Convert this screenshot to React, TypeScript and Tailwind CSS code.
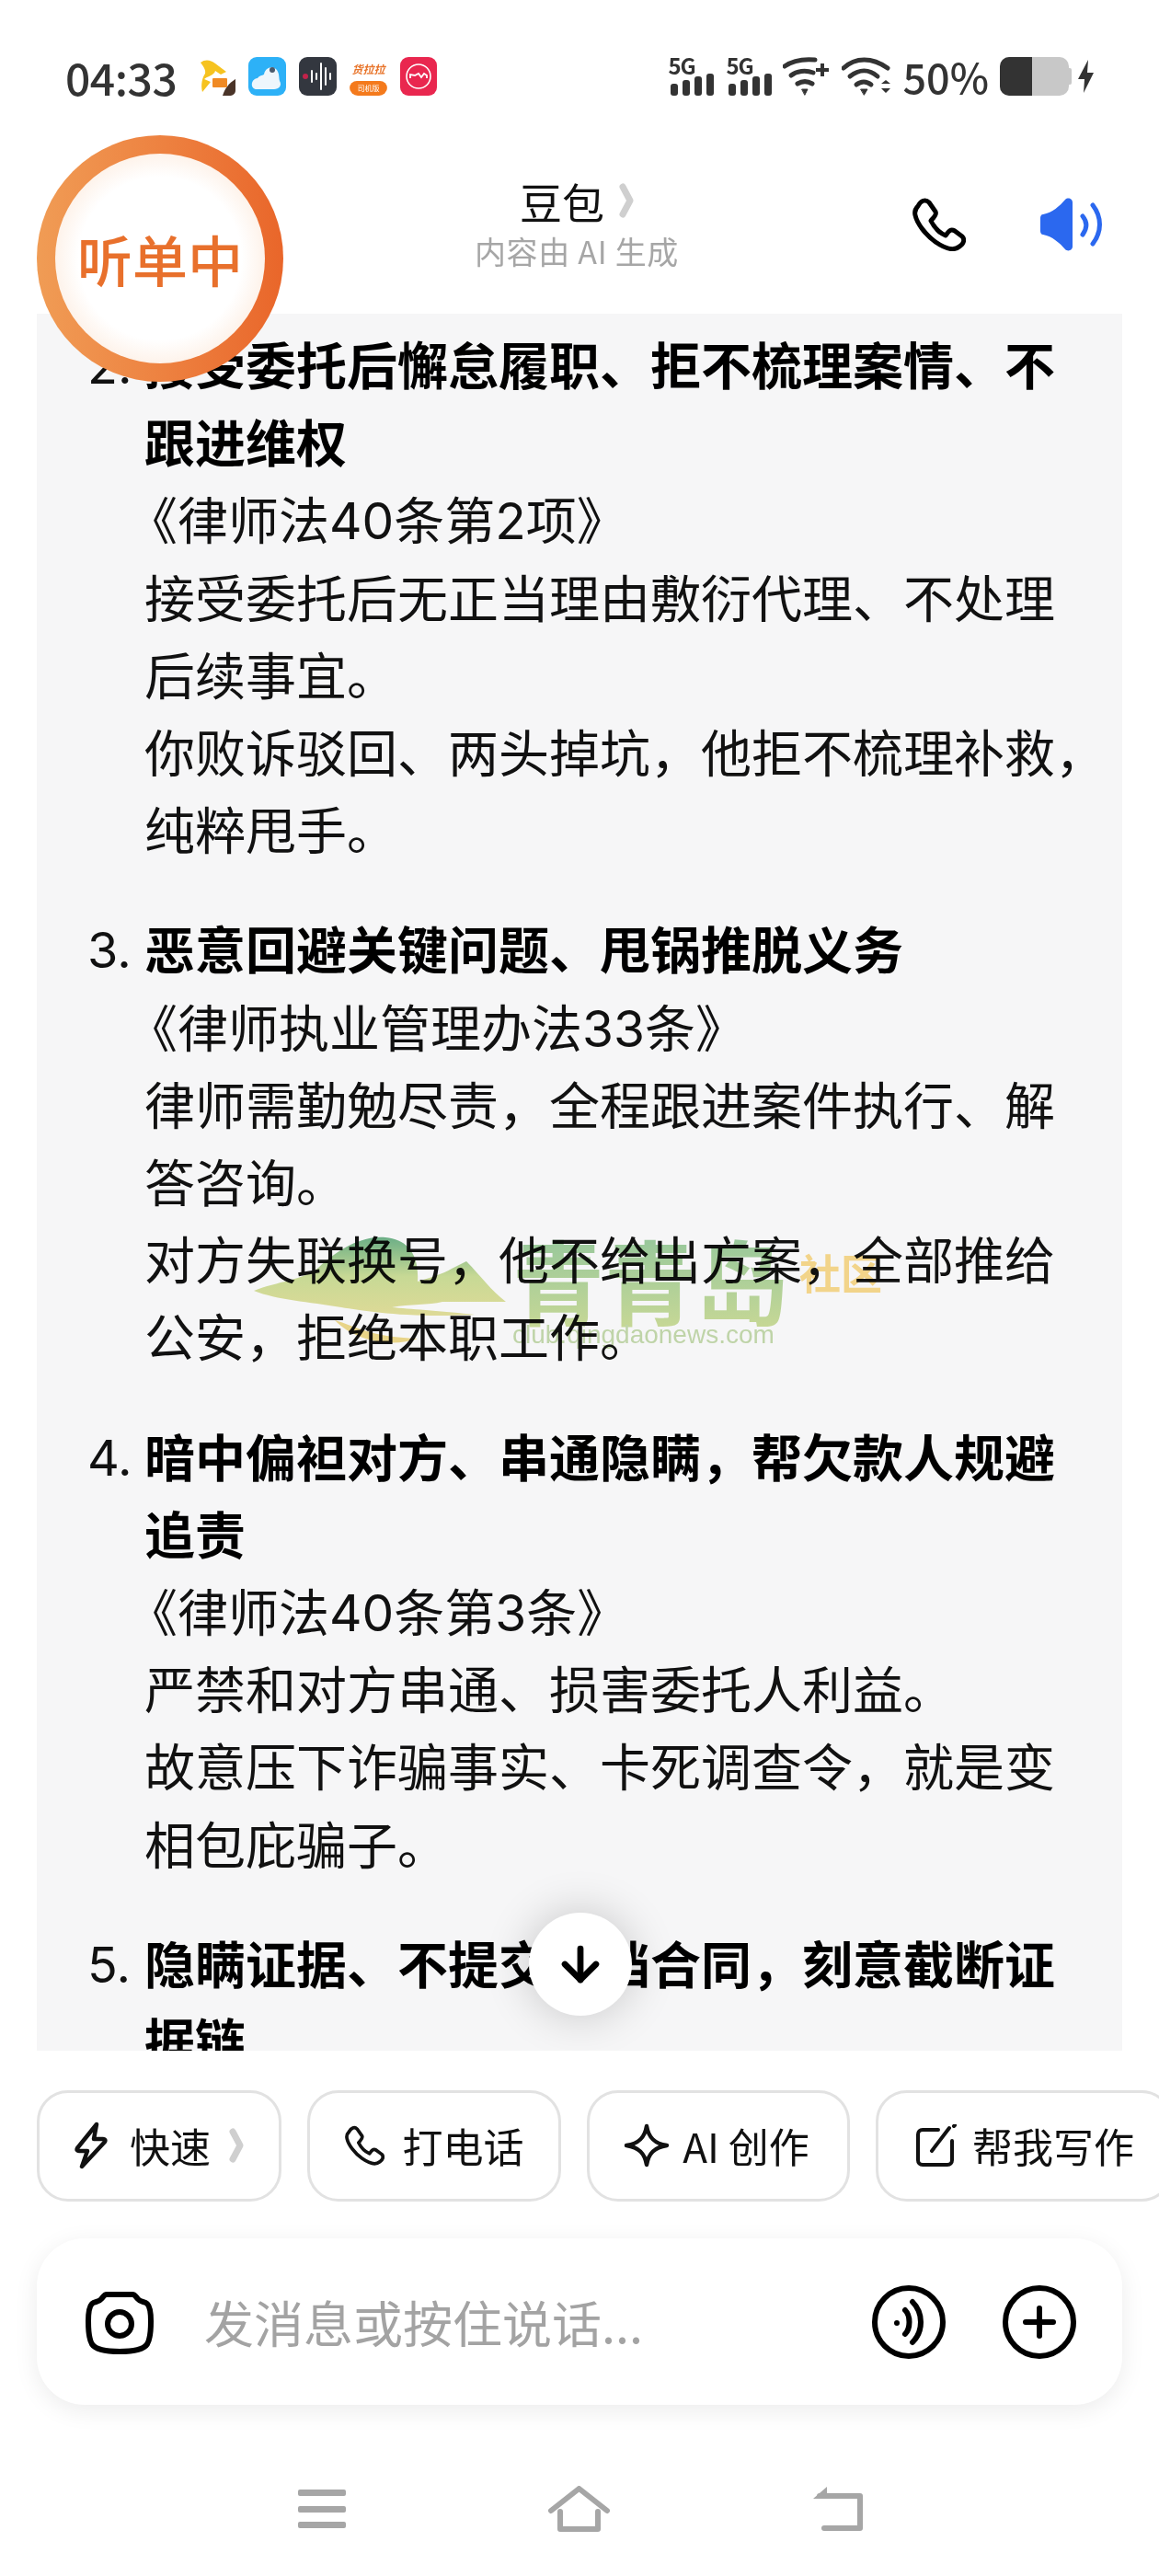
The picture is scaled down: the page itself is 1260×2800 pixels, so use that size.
import { ArrowDown } from 'lucide-react';

const items = [
  {
    n: '2.',
    title: ['接受委托后懈怠履职、拒不梳理案情、不', '跟进维权'],
    body: ['《律师法40条第2项》', '接受委托后无正当理由敷衍代理、不处理', '后续事宜。', '你败诉驳回、两头掉坑，他拒不梳理补救，', '纯粹甩手。'],
  },
  {
    n: '3.',
    title: ['恶意回避关键问题、甩锅推脱义务'],
    body: ['《律师执业管理办法33条》', '律师需勤勉尽责，全程跟进案件执行、解', '答咨询。', '对方失联换号，他不给出方案，全部推给', '公安，拒绝本职工作。'],
  },
  {
    n: '4.',
    title: ['暗中偏袒对方、串通隐瞒，帮欠款人规避', '追责'],
    body: ['《律师法40条第3条》', '严禁和对方串通、损害委托人利益。', '故意压下诈骗事实、卡死调查令，就是变', '相包庇骗子。'],
  },
  {
    n: '5.',
    title: ['隐瞒证据、不提交归档合同，刻意截断证', '据链'],
    body: [],
  },
];

function PhoneIcon({ className }: { className: string }) {
  return (
    <svg viewBox="0 0 58 58" className={className} fill="none" stroke="currentColor" strokeWidth="5" strokeLinejoin="round">
      <path d="M6 9C9 3 14 1 18 5L25 15C27 19 22 22 20 25C24 33 29 38 36 41C39 37 41 33 46 36L54 42C57 45 56 50 51 53C45 58 35 55 25 48C14 40 5 28 3 19C2 15 3 12 6 9Z" />
    </svg>
  );
}

function Chevron({ className }: { className: string }) {
  return (
    <svg viewBox="0 0 16 38" className={className} fill="none" stroke="#cfcfcf" strokeWidth="7" strokeLinecap="round" strokeLinejoin="round">
      <path d="M4 4L12 19L4 34" />
    </svg>
  );
}

function Signal() {
  return (
    <div className="flex h-[42px] w-[50px] flex-col justify-between">
      <span className="h-[18px] text-[24px] leading-[18px] font-bold tracking-[-1px] text-[#333]">5G</span>
      <svg viewBox="0 0 50 24" className="h-[24px] w-[50px]" fill="#333">
        <rect x="3" y="11" width="8" height="13" rx="3" />
        <rect x="16" y="7" width="8" height="17" rx="3" />
        <rect x="29" y="3" width="8" height="21" rx="3" />
        <rect x="42" y="0" width="8" height="24" rx="3" />
      </svg>
    </div>
  );
}

function AppIcons() {
  return (
    <div className="ml-[20px] flex items-center gap-[14px]">
      <svg viewBox="0 0 41 42" className="h-[42px] w-[41px]">
        <rect width="41" height="42" rx="9" fill="#fff" />
        <path d="M3 6C8 2 14 3 19 7L31 16L25 19L19 15C18 20 10 21 7 24L14 27L5 38C3 30 5 22 8 18C9 14 6 10 3 6Z" fill="#f6c320" />
        <rect x="16" y="23" width="16" height="10" rx="1" fill="#f08a24" />
        <path d="M41 24V36C41 40 38 42 34 42H27C29 35 34 28 41 24Z" fill="#4a3428" />
      </svg>
      <svg viewBox="0 0 41 42" className="h-[42px] w-[41px]">
        <rect width="41" height="42" rx="9" fill="#2db1f7" />
        <path d="M9 35C2 35 2 24 10 23C12 20 15 20 17 19C18 12 25 9 30 13C34 17 33 22 34 26C37 31 33 35 28 35Z" fill="#eef6fc" />
        <circle cx="26" cy="14" r="3" fill="#4a5a6c" />
      </svg>
      <svg viewBox="0 0 41 42" className="h-[42px] w-[41px]">
        <rect width="41" height="42" rx="9" fill="#33373f" />
        <circle cx="7" cy="21" r="3" fill="#c2224a" />
        <g stroke="#fff" strokeWidth="2" strokeLinecap="round">
          <path d="M14 15V27" />
          <path d="M19 18V24" />
          <path d="M24 7V35" />
          <path d="M29 12V30" />
          <path d="M34 18V24" />
        </g>
      </svg>
      <div className="flex h-[42px] w-[41px] flex-col overflow-hidden rounded-[9px] bg-white">
        <div className="flex h-[26px] items-center justify-center text-[12px] leading-none font-bold text-[#e8742a] italic">货拉拉</div>
        <div className="flex h-[16px] items-center justify-center rounded-t-[8px] bg-[#f47a1c] text-[8px] leading-none text-white">司机版</div>
      </div>
      <svg viewBox="0 0 40 42" className="h-[42px] w-[40px]">
        <rect width="40" height="42" rx="9" fill="#e9274f" />
        <circle cx="20" cy="21" r="13" fill="none" stroke="#fff" strokeWidth="1.6" />
        <path d="M11 23V19L16 20L20 18L23 22L26 18L29 20V23" fill="none" stroke="#fff" strokeWidth="1.8" />
      </svg>
    </div>
  );
}

function StatusBar() {
  return (
    <div className="mt-[62px] flex h-[42px] shrink-0 items-center pl-[71px]">
      <span className="w-[124px] text-[48px] leading-[42px] font-medium tracking-[-0.5px] text-[#333]">04:33</span>
      <AppIcons />
      <div className="mr-[71px] ml-auto flex items-center">
        <Signal />
        <div className="ml-[13px]"><Signal /></div>
        <svg viewBox="0 0 50 42" className="ml-[12px] h-[42px] w-[50px]" fill="none" stroke="#333" strokeWidth="5" strokeLinecap="round">
          <path d="M2 10C12 3 24 2 35 3" />
          <path d="M9 20C15 15 25 14 33 17" />
          <path d="M16 29C21 26 27 26 32 29" />
          <path d="M21 35H27L24 41Z" fill="#333" strokeWidth="1" />
          <path d="M36 14H50M43 7V21" strokeWidth="4" strokeLinecap="butt" />
        </svg>
        <svg viewBox="0 0 53 42" className="ml-[14px] h-[42px] w-[53px]" fill="none" stroke="#333" strokeWidth="5" strokeLinecap="round">
          <path d="M2 12C15 0 33 0 50 12" />
          <path d="M9 21C19 13 30 13 39 21" />
          <path d="M16 30C21 26 27 26 32 30" />
          <path d="M21 35H28L24.5 41Z" fill="#333" strokeWidth="1" />
          <path d="M43 29L48 25L53 29ZM43 34L48 39L53 34Z" fill="#333" stroke="none" />
        </svg>
        <span className="ml-[13px] text-[45px] leading-[42px] font-medium text-[#333]">50%</span>
        <div className="ml-[12px] flex h-[42px] w-[75px] overflow-hidden rounded-[10px] bg-[#c8c8c8]">
          <div className="h-full w-[35px] bg-[#333]" />
        </div>
        <div className="h-[18px] w-[3px] rounded-r-[2px] bg-[#c8c8c8]" />
        <svg viewBox="0 0 17 36" className="ml-[7px] h-[36px] w-[17px]" fill="#333">
          <path d="M11 0L0 21H7L6 36L17 14H10Z" />
        </svg>
      </div>
    </div>
  );
}

function Header() {
  return (
    <div className="grid h-[237px] shrink-0 grid-cols-[1fr_auto_1fr] pt-[90px]">
      <div />
      <div className="flex flex-col items-center pr-[6px]">
        <div className="flex h-[48px] items-center gap-[16px] text-[46px] leading-[48px] text-[#111]">
          豆包
          <Chevron className="h-[38px] w-[16px]" />
        </div>
        <div className="mt-[9px] text-[34px] leading-[44px] tracking-[0.7px] text-[#a6a6a6]">内容由 AI 生成</div>
      </div>
      <div className="flex items-start justify-end gap-[78px] pt-[21px] pr-[62px]">
        <PhoneIcon className="h-[58px] w-[58px] text-black" />
        <svg viewBox="0 0 70 58" className="h-[58px] w-[70px]" fill="none" stroke="#2b68ef" strokeWidth="5" strokeLinecap="round">
          <path d="M3 22C3 20 4 18 6 18C16 16 24 9 30 2C33 -1 38 1 38 5V53C38 57 33 59 30 56C24 49 16 42 6 40C4 40 3 38 3 36Z" fill="#2b68ef" stroke="none" />
          <path d="M49 20C54 26 54 33 49 40" />
          <path d="M60 8C70 21 70 37 60 50" />
        </svg>
      </div>
    </div>
  );
}

function ListenBadge() {
  return (
    <div className="absolute top-[147px] left-[40px] flex h-[268px] w-[268px] items-center justify-center rounded-full bg-linear-to-r from-[#f09c55] to-[#e9662a]">
      <div className="flex h-[228px] w-[228px] items-center justify-center rounded-full bg-[radial-gradient(circle,#ffffff_55%,#fbdcc4_100%)]">
        <span className="text-[60px] leading-none font-medium text-[#e8702c]">听单中</span>
      </div>
    </div>
  );
}

function Watermark() {
  return (
    <div className="absolute top-[1002px] left-[236px] flex gap-[7px] mix-blend-multiply">
      <svg viewBox="0 0 274 117" className="h-[117px] w-[274px]">
        <defs>
          <linearGradient id="mtn" x1="0" y1="0" x2="0" y2="1">
            <stop offset="0" stopColor="#6fb58a" />
            <stop offset="0.5" stopColor="#cfe19a" />
            <stop offset="1" stopColor="#e6e29c" />
          </linearGradient>
        </defs>
        <path d="M0 60C25 50 55 48 70 35C95 12 120 0 143 2C165 4 180 18 178 50C190 46 205 42 215 36L231 28C245 42 258 60 274 72L205 72C190 76 170 74 150 78C170 80 205 82 240 86C170 90 120 82 95 78C60 72 25 70 0 60Z" fill="url(#mtn)" />
        <path d="M88 92C110 98 125 110 178 112C150 122 110 115 88 92Z" fill="#f1dc8c" />
      </svg>
      <div className="flex flex-col">
        <div className="flex h-[96px] items-start">
          <span className="mt-[4px] bg-linear-to-b from-[#9ed0a0] to-[#cfe09a] bg-clip-text text-[100px] leading-[100px] font-bold text-transparent">青青岛</span>
          <span className="mt-[18px] ml-[12px] text-[45px] leading-[50px] font-bold text-[#fbdc8e]">社区</span>
        </div>
        <span className="font-['Liberation_Sans',sans-serif] text-[28px] leading-[24px] text-[#c6dcae]">club.qingdaonews.com</span>
      </div>
    </div>
  );
}

function Content() {
  return (
    <div className="relative mx-[40px] h-[1888px] shrink-0 overflow-hidden bg-[#f6f6f7] pt-[15px] pl-[55px] font-['Inter','Noto_Sans_CJK_SC',sans-serif] text-[55px] leading-[84.2px] text-[#111]">
      <div className="flex flex-col gap-[46px]">
        {items.map((item) => (
          <div key={item.n} className="flex">
            <span className="w-[62px] shrink-0 text-[54px]">{item.n}</span>
            <div className="whitespace-nowrap">
              {item.title.map((line) => (
                <div key={line} className="font-bold text-black">{line}</div>
              ))}
              {item.body.map((line) => (
                <div key={line} className={line.startsWith('《') ? 'ml-[-19px]' : ''}>{line}</div>
              ))}
            </div>
          </div>
        ))}
      </div>
      <Watermark />
      <div className="absolute bottom-[38px] left-[535px] flex h-[112px] w-[112px] items-center justify-center rounded-full bg-white shadow-[0_0_50px_rgba(0,0,0,0.2)]">
        <ArrowDown className="h-[58px] w-[58px] text-black" strokeWidth={2.8} />
      </div>
    </div>
  );
}

function Pills() {
  return (
    <div className="mt-[43px] flex h-[121px] shrink-0 gap-[28px] overflow-hidden pl-[40px] text-[44px] text-[#111]">
      <div className="flex w-[266px] shrink-0 items-center justify-center rounded-[34px] border-[3px] border-[#e2e2e2] pb-[2px]">
        <svg viewBox="0 0 36 52" className="h-[52px] w-[36px]" fill="none" stroke="#111" strokeWidth="4.5" strokeLinejoin="round">
          <path d="M24 3L3 29C2 31 3 32 5 32H14L8 49L33 22C34 20 33 19 31 19H21Z" />
        </svg>
        <span className="ml-[24px]">快速</span>
        <Chevron className="ml-[20px] h-[38px] w-[16px]" />
      </div>
      <div className="flex w-[276px] shrink-0 items-center justify-center gap-[20px] rounded-[34px] border-[3px] border-[#e2e2e2] pb-[2px]">
        <PhoneIcon className="h-[44px] w-[43px]" />
        <span>打电话</span>
      </div>
      <div className="flex w-[286px] shrink-0 items-center justify-center gap-[14px] rounded-[34px] border-[3px] border-[#e2e2e2] pr-[4px] pb-[2px]">
        <svg viewBox="0 0 50 48" className="h-[48px] w-[50px]" fill="none" stroke="#111" strokeWidth="4.5" strokeLinejoin="round">
          <path d="M25 3C27 15 33 22 47 24C33 26 27 33 25 45C23 33 17 26 3 24C17 22 23 15 25 3Z" />
        </svg>
        <span>AI 创作</span>
      </div>
      <div className="flex w-[323px] shrink-0 items-center gap-[17px] rounded-[34px] border-[3px] border-[#e2e2e2] pb-[2px] pl-[41px]">
        <svg viewBox="0 0 44 46" className="h-[46px] w-[44px]" fill="none" stroke="#111" strokeWidth="4" strokeLinecap="round">
          <path d="M24 6H7C4 6 2 8 2 11V39C2 42 4 44 7 44H34C37 44 39 42 39 39V18" />
          <path d="M17 29L36 4" />
          <path d="M41 2L42 1" />
        </svg>
        <span>帮我写作</span>
      </div>
    </div>
  );
}

function InputBar() {
  return (
    <div className="mx-[40px] mt-[40px] flex h-[181px] shrink-0 items-center rounded-[52px] bg-white pr-[50px] pl-[52px] shadow-[0_6px_26px_rgba(0,0,0,0.08)]">
      <svg viewBox="0 0 76 70" className="h-[70px] w-[76px]" fill="none" stroke="#000" strokeWidth="6">
        <path d="M24 5H52C55 5 56 8 58 10C61 14 65 12 68 15C71 18 72 23 72 34C72 47 71 54 68 59C64 65 52 67 38 67C24 67 12 65 8 59C5 54 4 47 4 34C4 23 5 18 8 15C11 12 15 14 18 10C20 8 21 5 24 5Z" strokeLinejoin="round" />
        <circle cx="38" cy="37" r="13" />
      </svg>
      <span className="ml-[54px] text-[54px] text-[#a3a3a3]">发消息或按住说话...</span>
      <svg viewBox="0 0 80 80" className="ml-auto h-[80px] w-[80px]" fill="none" stroke="#000" strokeWidth="6" strokeLinecap="round">
        <circle cx="40" cy="40" r="37" />
        <circle cx="27" cy="41" r="3" fill="#000" stroke="none" />
        <path d="M36 27C42 33 42 47 36 53" />
        <path d="M44 18C56 30 56 50 44 62" />
      </svg>
      <svg viewBox="0 0 80 80" className="ml-[62px] h-[80px] w-[80px]" fill="none" stroke="#000" strokeWidth="6" strokeLinecap="round">
        <circle cx="40" cy="40" r="37" />
        <path d="M25 40H55M40 25V55" />
      </svg>
    </div>
  );
}

function NavBar() {
  return (
    <div className="mt-[88px] flex h-[50px] shrink-0 items-center pl-[324px]">
      <div className="flex h-[42px] w-[52px] flex-col justify-between">
        <div className="h-[7px] rounded-[2px] bg-[#a6a6a6]" />
        <div className="h-[7px] rounded-[2px] bg-[#a6a6a6]" />
        <div className="h-[7px] rounded-[2px] bg-[#a6a6a6]" />
      </div>
      <svg viewBox="0 0 67 50" className="ml-[220px] h-[50px] w-[67px]" fill="none" stroke="#a6a6a6" strokeWidth="6" strokeLinecap="round" strokeLinejoin="round">
        <path d="M3 27L33.5 3L64 27" />
        <path d="M13 28V47H54V28" />
      </svg>
      <svg viewBox="0 0 56 50" className="ml-[220px] h-[50px] w-[56px]" fill="none" stroke="#a6a6a6" strokeWidth="6" strokeLinecap="round" strokeLinejoin="round">
        <path d="M8 11H52V46H13" />
        <path d="M1 14L16 1V14Z" fill="#a6a6a6" stroke="none" />
      </svg>
    </div>
  );
}

export default function App() {
  return (
    <div className="relative flex h-[2800px] w-[1260px] flex-col overflow-hidden bg-white font-['Noto_Sans_CJK_SC',sans-serif]">
      <StatusBar />
      <Header />
      <Content />
      <Pills />
      <InputBar />
      <NavBar />
      <ListenBadge />
    </div>
  );
}
